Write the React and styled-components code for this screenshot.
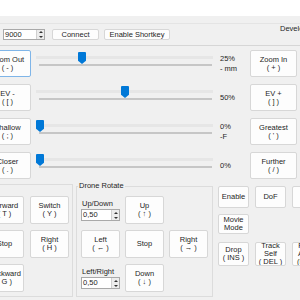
import { Fragment } from "react";
import styled, { createGlobalStyle } from "styled-components";

const GlobalStyle = createGlobalStyle`
  html, body {
    margin: 0;
    padding: 0;
    background: #f0f0f0;
    overflow: hidden;
  }
  body {
    font-family: "Liberation Sans", Arial, sans-serif;
    font-size: 7.5px;
    color: #1e1e1e;
  }
`;

const Viewport = styled.div`
  width: 300px;
  height: 300px;
  overflow: hidden;
`;

// the window is wider than the view and starts left of it
const Window = styled.div`
  width: 360px;
  margin-left: -20px;
`;

const TitleStrip = styled.div`
  height: 16px;
  background: #fff;
`;

const MenuStrip = styled.div`
  height: 7px;
  border-bottom: 1px solid #e4e4e4;
`;

const Toolbar = styled.div`
  display: flex;
  align-items: flex-start;
  height: 16px;
  padding: 5px 0 0 23px;
  border-bottom: 1px solid #d6d6d6;
`;

const Button = styled.button`
  box-sizing: border-box;
  width: ${(p) => (p.$w ? `${p.$w}px` : "100%")};
  height: ${(p) => (p.$h ? `${p.$h}px` : "100%")};
  margin: 0 0 0 ${(p) => p.$ml ?? 0}px;
  padding: 0;
  display: flex;
  align-items: center;
  justify-content: center;
  background: #fdfdfd;
  border: 1px solid ${(p) => (p.$focused ? "#7fb5e8" : "#d7d7d7")};
  border-radius: 2px;
  font: inherit;
  color: inherit;
  line-height: 8px;
  text-align: center;
  white-space: pre-line;
  overflow: hidden;
`;

const SpinFrame = styled.div`
  box-sizing: border-box;
  display: flex;
  width: ${(p) => p.$w}px;
  height: ${(p) => p.$h}px;
  background: #fff;
  border: 1px solid #a9a9a9;
`;

const SpinValue = styled.div`
  flex: 1;
  padding-left: 1px;
  line-height: ${(p) => p.$h - 2}px;
`;

const SpinArrows = styled.div`
  width: 7px;
  display: flex;
  flex-direction: column;
  border-left: 1px solid #d0d0d0;
  background: #ececec;
`;

const SpinArrow = styled.div`
  flex: 1;
  display: flex;
  align-items: center;
  justify-content: center;
  &::after {
    content: "";
    border-left: 2px solid transparent;
    border-right: 2px solid transparent;
    ${(p) => (p.$down ? "border-top" : "border-bottom")}: 2px solid #333;
  }
`;

const DevLabel = styled.div`
  margin: -4px 0 0 110px;
  line-height: 8px;
`;

const ControlGrid = styled.div`
  display: grid;
  grid-template-columns: 47px 179px 25px 47px;
  grid-auto-rows: 27px;
  column-gap: 5px;
  row-gap: 7px;
  padding: 4px 0 0 4px;
`;

const SliderBox = styled.div`
  position: relative;
`;

const Track = styled.div`
  margin: 6px 2px 0 0;
  height: 3px;
  background: #e6e6e6;
`;

const Ticks = styled.div`
  margin: 5px 3px 0 3px;
  height: 2px;
  background: #c6c6c6;
`;

const Thumb = styled.div`
  position: absolute;
  top: 2px;
  width: 8px;
  height: 12px;
  background: #0078d7;
  border-radius: 1px 1px 0 0;
  clip-path: polygon(0 0, 100% 0, 100% 72%, 50% 100%, 0 72%);
`;

const ValueLabel = styled.div`
  display: flex;
  flex-direction: column;
  justify-content: center;
  line-height: 10px;
  white-space: nowrap;
`;

const Bottom = styled.div`
  display: flex;
  align-items: flex-start;
  margin-top: 3px;
`;

const MoveGroup = styled.div`
  display: grid;
  grid-template-columns: 39px 39px;
  grid-auto-rows: 28px;
  gap: 6px;
  margin-top: 2px;
  padding: 11px 3px 4px 4px;
  border: 1px solid #dcdcdc;
`;

const RotateGroup = styled.fieldset`
  margin: 0 0 0 3px;
  padding: 6px 4px 4px 4px;
  min-width: 0;
  border: 1px solid #dcdcdc;
`;

const GroupTitle = styled.legend`
  margin-left: -3px;
  padding: 0 1px;
  line-height: 8px;
`;

const RotateGrid = styled.div`
  display: grid;
  grid-template-columns: 39px 39px 39px;
  grid-auto-rows: 28px;
  column-gap: 5px;
  row-gap: 6px;
`;

const SpinCell = styled.div`
  display: flex;
  flex-direction: column;
  justify-content: flex-end;
  gap: 1px;
  padding-bottom: 3px;
`;

const SpinCaption = styled.div`
  padding-left: 1px;
  line-height: 8px;
`;

const ActionPanel = styled.div`
  display: flex;
  flex-direction: column;
  margin: 4px 0 0 5px;
`;

const ActionRow = styled.div`
  display: flex;
  gap: 6px;
  height: ${(p) => p.$h}px;
  margin-top: ${(p) => p.$mt ?? 0}px;
`;

function SpinBox({ value, w, h }) {
  return (
    <SpinFrame $w={w} $h={h}>
      <SpinValue $h={h}>{value}</SpinValue>
      <SpinArrows>
        <SpinArrow />
        <SpinArrow $down />
      </SpinArrows>
    </SpinFrame>
  );
}

function Slider({ pct }) {
  return (
    <SliderBox>
      <Track />
      <Ticks />
      <Thumb style={{ left: `${Math.round((pct / 100) * 169)}px` }} />
    </SliderBox>
  );
}

const rows = [
  { id: "zoom", left: "Zoom Out\n( - )", right: "Zoom In\n( + )", pct: 25, label: ["25%", "- mm"], focused: true },
  { id: "ev", left: "EV -\n( [ )", right: "EV +\n( ] )", pct: 50, label: ["50%"] },
  { id: "dof", left: "Shallow\n( ; )", right: "Greatest\n( ' )", pct: 0, label: ["0%", "-F"] },
  { id: "focus", left: "Closer\n( . )", right: "Further\n( / )", pct: 0, label: ["0%"] },
];

export default function App() {
  return (
    <Viewport>
      <GlobalStyle />
      <Window>
        <TitleStrip />
        <MenuStrip />
        <Toolbar>
          <SpinBox value="9000" w={42} h={11} />
          <Button $w={47} $h={11} $ml={7}>Connect</Button>
          <Button $w={66} $h={11} $ml={5}>Enable Shortkey</Button>
          <DevLabel>Developer</DevLabel>
        </Toolbar>

        <ControlGrid>
          {rows.map((r) => (
            <Fragment key={r.id}>
              <Button $focused={r.focused}>{r.left}</Button>
              <Slider pct={r.pct} />
              <ValueLabel>
                {r.label.map((l) => (
                  <span key={l}>{l}</span>
                ))}
              </ValueLabel>
              <Button>{r.right}</Button>
            </Fragment>
          ))}
        </ControlGrid>

        <Bottom>
          <MoveGroup>
            <Button>{"Forward\n( T )"}</Button>
            <Button>{"Switch\n( Y )"}</Button>
            <Button>Stop</Button>
            <Button>{"Right\n( H )"}</Button>
            <Button>{"Backward\n( G )"}</Button>
          </MoveGroup>

          <RotateGroup>
            <GroupTitle>Drone Rotate</GroupTitle>
            <RotateGrid>
              <SpinCell>
                <SpinCaption>Up/Down</SpinCaption>
                <SpinBox value="0,50" w={39} h={12} />
              </SpinCell>
              <Button>{"Up\n( ↑ )"}</Button>
              <div />
              <Button>{"Left\n( ← )"}</Button>
              <Button>Stop</Button>
              <Button>{"Right\n( → )"}</Button>
              <SpinCell>
                <SpinCaption>Left/Right</SpinCaption>
                <SpinBox value="0,50" w={39} h={12} />
              </SpinCell>
              <Button>{"Down\n( ↓ )"}</Button>
            </RotateGrid>
          </RotateGroup>

          <ActionPanel>
            <ActionRow $h={22}>
              <Button $w={31}>Enable</Button>
              <Button $w={31}>DoF</Button>
              <Button $w={31}>ISO</Button>
            </ActionRow>
            <ActionRow $h={20} $mt={6}>
              <Button $w={31}>{"Movie\nMode"}</Button>
            </ActionRow>
            <ActionRow $h={24} $mt={8}>
              <Button $w={31}>{"Drop\n( INS )"}</Button>
              <Button $w={31}>{"Track\nSelf\n( DEL )"}</Button>
              <Button $w={31}>{"Fixed\nAngle\n(END)"}</Button>
            </ActionRow>
          </ActionPanel>
        </Bottom>
      </Window>
    </Viewport>
  );
}
